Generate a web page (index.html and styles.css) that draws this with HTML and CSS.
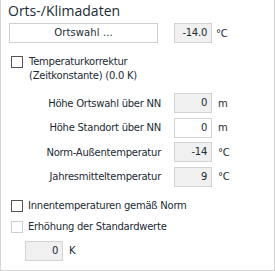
FILE: index.html
```html
<!DOCTYPE html>
<html>
<head>
<meta charset="utf-8">
<link rel="stylesheet" href="styles.css">
</head>
<body>
<div class="panel">
  <div class="title">Orts-/Klimadaten</div>
  <div class="row-top">
    <div class="btn">Ortswahl ...</div>
    <div class="field ro">-14.0</div>
    <div class="unit">°C</div>
  </div>
  <div class="check-row multi">
    <span class="box"></span>
    <span class="clabel">Temperaturkorrektur<br>(Zeitkonstante) (0.0 K)</span>
  </div>
  <div class="grid">
    <div class="glabel">Höhe Ortswahl über NN</div>
    <div class="field ro">0</div>
    <div class="unit">m</div>
    <div class="glabel">Höhe Standort über NN</div>
    <div class="field">0</div>
    <div class="unit">m</div>
    <div class="glabel">Norm-Außentemperatur</div>
    <div class="field ro">-14</div>
    <div class="unit">°C</div>
    <div class="glabel">Jahresmitteltemperatur</div>
    <div class="field ro">9</div>
    <div class="unit">°C</div>
  </div>
  <div class="check-row c1">
    <span class="box"></span>
    <span class="clabel">Innentemperaturen gemäß Norm</span>
  </div>
  <div class="check-row c2">
    <span class="box disabled"></span>
    <span class="clabel">Erhöhung der Standardwerte</span>
  </div>
  <div class="row-k">
    <div class="field ro">0</div>
    <div class="unit">K</div>
  </div>
</div>
</body>
</html>
```
FILE: styles.css
```css
html, body {
  margin: 0;
  padding: 0;
  background: #ffffff;
}
.panel {
  width: 275px;
  height: 271px;
  box-sizing: border-box;
  border-left: 1px solid #d4d4d4;
  border-right: 1px solid #d4d4d4;
  border-bottom: 1px solid #d4d4d4;
  font-family: "DejaVu Sans", sans-serif;
  font-size: 10px;
  letter-spacing: -0.25px;
  color: #222a35;
}
.title {
  font-family: "Open Sans", sans-serif;
  font-size: 14px;
  letter-spacing: 0;
  line-height: 16px;
  padding: 3px 0 0 7px;
}
.row-top {
  display: flex;
  align-items: center;
  margin-top: 4px;
  padding-left: 8px;
  height: 20px;
}
.btn {
  width: 147px;
  height: 18px;
  border: 1px solid #d0d0d0;
  background: #fff;
  text-align: center;
  line-height: 18px;
  letter-spacing: 0.1px;
}
.field {
  width: 32px;
  height: 18px;
  border: 1px solid #d3d3d3;
  background: #fff;
  text-align: right;
  line-height: 18px;
  padding-right: 4px;
  flex: none;
}
.field.ro {
  background: #f0f0f0;
}
.row-top .field {
  margin-left: 16px;
}
.unit {
  margin-left: 4px;
}
.check-row {
  display: flex;
  align-items: flex-start;
  padding-left: 10px;
  line-height: 13px;
}
.check-row.multi {
  margin-top: 12px;
  line-height: 13.5px;
}
.box {
  width: 10px;
  height: 10px;
  border: 1px solid #555;
  background: #fff;
  flex: none;
  margin-top: 1px;
}
.box.disabled {
  border-color: #cfcfcf;
}
.clabel {
  margin-left: 5px;
}
.multi .clabel {
  margin-left: 6px;
}
.grid {
  display: grid;
  grid-template-columns: 160px 38px auto;
  row-gap: 4.5px;
  margin-top: 11px;
  align-items: center;
}
.glabel {
  text-align: right;
  white-space: nowrap;
}
.grid .field {
  margin-left: 13px;
}
.grid .unit {
  margin-left: 19px;
}
.check-row.c1 {
  margin-top: 12px;
}
.check-row.c2 {
  margin-top: 8px;
}
.row-k {
  display: flex;
  align-items: center;
  padding-left: 24px;
  margin-top: 8px;
}
.row-k .unit {
  margin-left: 6px;
}
```
